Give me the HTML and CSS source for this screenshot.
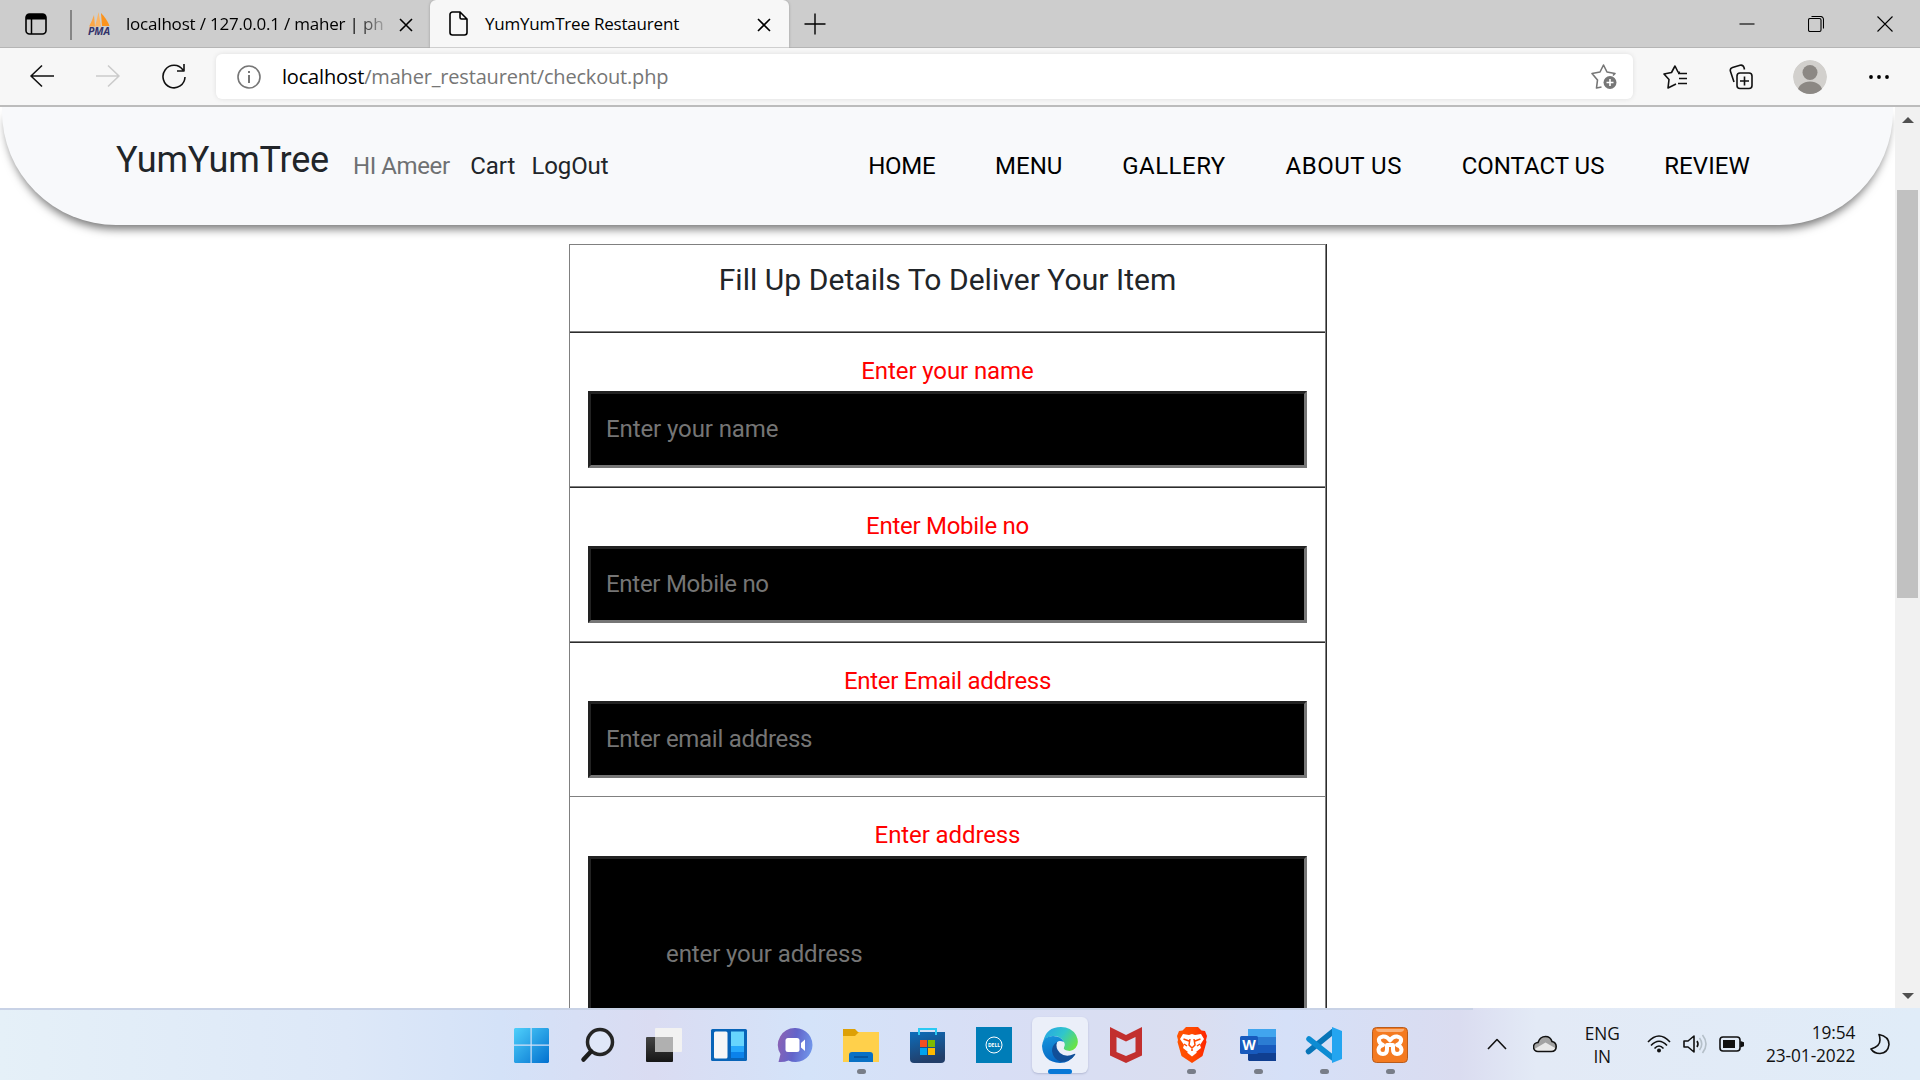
FILE: index.html
```html
<!DOCTYPE html>
<html lang="en">
<head>
<meta charset="utf-8">
<title>YumYumTree Restaurent</title>
<link rel="stylesheet" href="styles.css">
</head>
<body>
<div class="screen">
  <header class="tabstrip">
    <svg class="tab-actions" width="22" height="22" viewBox="0 0 22 22"><rect x="1" y="1" width="20" height="20" rx="3.5" fill="none" stroke="#000" stroke-width="1.6"/><path d="M1 6.5V4a3 3 0 0 1 3-3h14a3 3 0 0 1 3 3v2.500z"/><path d="M6.500 6v15" stroke="#000" stroke-width="1.500"/></svg>
    <span class="tab-divider"></span>
    <div class="tab tab-idle">
      <svg class="favicon" width="26" height="26" viewBox="0 0 26 26"><path d="M3 15.500Q6 10 8 4l1 11.500z" fill="#fba646"/><path d="M9 15.500Q11 8 12.500 1l2.500 14.500z" fill="#fbb565"/><path d="M15 2q6 6 8.500 13h-7.500z" fill="#fb931c"/><text class="pma" x="13" y="24" text-anchor="middle">PMA</text></svg>
      <span class="tab-title tab-title-cut">localhost / 127.0.0.1 / maher | ph</span>
      <svg class="x" width="14" height="14" viewBox="0 0 14 14"><path d="M1 1l12 12M13 1L1 13"/></svg>
    </div>
    <div class="tab tab-active">
      <svg class="doc" width="19" height="25" viewBox="0 0 19 25"><path d="M3.500 1H11l7 7v13.500a2.500 2.500 0 0 1-2.500 2.500h-12A2.500 2.500 0 0 1 1 21.500v-18A2.500 2.500 0 0 1 3.500 1zM11 1v5.500A1.500 1.500 0 0 0 12.500 8H18"/></svg>
      <span class="tab-title">YumYumTree Restaurent</span>
      <svg class="x" width="14" height="14" viewBox="0 0 14 14"><path d="M1 1l12 12M13 1L1 13"/></svg>
    </div>
    <svg class="new-tab" width="22" height="22" viewBox="0 0 22 22"><path d="M11 .5v21M.5 11h21"/></svg>
    <div class="window-controls">
      <svg width="16" height="16" viewBox="0 0 16 16"><path d="M.5 8h15"/></svg>
      <svg width="16" height="16" viewBox="0 0 16 16"><rect x=".5" y="2.500" width="12.500" height="13" rx="1.500"/><path d="M3.500 .5h9a3 3 0 0 1 3 3v9"/></svg>
      <svg width="16" height="16" viewBox="0 0 16 16"><path d="M.5 .5l15 15M15.500 .5l-15 15"/></svg>
    </div>
  </header>

  <div class="toolbar">
    <svg class="line-icon" width="24" height="24" viewBox="0 0 24 24"><path d="M12 1.500L1 12l11 10.500M1 12h23"/></svg>
    <svg class="line-icon dim" width="24" height="24" viewBox="0 0 24 24"><path d="M12 1.500L23 12 12 22.500M23 12H0"/></svg>
    <svg class="line-icon" width="24" height="26" viewBox="0 0 24 26"><path d="M21 7A11 11.300 0 1 0 23 14M22 1v7h-7"/></svg>
    <div class="address">
      <svg class="line-icon gray" width="24" height="24" viewBox="0 0 24 24"><circle cx="12" cy="12" r="11"/><path d="M12 10v8M12 6v2" stroke-width="2"/></svg>
      <span class="url"><b>localhost</b>/maher_restaurent/checkout.php</span>
      <svg class="line-icon gray" width="27" height="26" viewBox="0 0 27 26"><path d="M10.500 23L5.500 24l1-8L1 9.500l8-1.500L12.500 1 16 8l8 1.500-2 2"/><circle cx="19" cy="18.500" r="6.500" fill="#767676" stroke="none"/><path d="M19 15v7M15.500 18.500h7" stroke="#fff"/></svg>
    </div>
    <div class="toolbar-actions">
      <svg class="line-icon" width="24" height="24" viewBox="0 0 24 24"><path d="M17 7.500l-2-.5L12 1 8.500 7.500 1 9l5 5.500L5 23l8-4M15 8.500h9M16 13.500h8M15 18.500h9"/></svg>
      <svg class="line-icon" width="24" height="26" viewBox="0 0 24 26"><rect x="8" y="9" width="15" height="15.500" rx="3"/><path d="M15.500 12.500v9M11 17h9M5 18L1.500 7.500Q.5 4.500 3.500 3.500L11 1.200Q14 .5 15 3.500l.5 2"/></svg>
      <svg class="avatar" width="34" height="34" viewBox="0 0 34 34"><defs><clipPath id="face"><circle cx="17" cy="17" r="17"/></clipPath></defs><g clip-path="url(#face)"><circle cx="17" cy="17" r="17" fill="#d2d0cd"/><circle cx="17" cy="12.500" r="7.500" fill="#8c8884"/><ellipse cx="17" cy="32" rx="12.500" ry="10.500" fill="#8c8884"/></g></svg>
      <svg width="20" height="4" viewBox="0 0 20 4"><circle cx="2" cy="2" r="1.900"/><circle cx="10" cy="2" r="1.900"/><circle cx="18" cy="2" r="1.900"/></svg>
    </div>
  </div>

  <main class="viewport">
    <div class="page">
      <nav class="navbar">
        <a class="brand">YumYumTree</a>
        <span class="greeting">HI Ameer</span>
        <a class="cart">Cart</a>
        <a class="logout">LogOut</a>
        <div class="menu">
          <a class="tight">HOME</a><a>MENU</a><a class="s-5">GALLERY</a><a class="s-5">ABOUT US</a><a>CONTACT US</a><a class="s-1">REVIEW</a>
        </div>
      </nav>
      <form class="details">
        <div class="cell heading">Fill Up Details To Deliver Your Item</div>
        <div class="cell"><label>Enter your name</label><input placeholder="Enter your name"></div>
        <div class="cell tight"><label>Enter Mobile no</label><input placeholder="Enter Mobile no"></div>
        <div class="cell tight"><label>Enter Email address</label><input placeholder="Enter email address"></div>
        <div class="cell last"><label>Enter address</label><textarea placeholder="enter your address"></textarea></div>
      </form>
    </div>
    <div class="scrollbar">
      <svg width="12" height="6" viewBox="0 0 12 6"><path d="M0 6L6 0l6 6z"/></svg>
      <span class="thumb"></span>
      <svg class="down" width="12" height="6" viewBox="0 0 12 6"><path d="M0 0h12L6 6z"/></svg>
    </div>
  </main>

  <footer class="taskbar">
    <div class="apps">
      <div class="app"><svg viewBox="0 0 36 36"><defs><linearGradient id="win" x1="0" y1="0" x2="1" y2="1"><stop offset="0" stop-color="#4fd0fb"/><stop offset="1" stop-color="#0270cf"/></linearGradient></defs><path d="M2 1h15.500v16.500H1V2zM18.700 1H35l1 1v15.500H18.700zM1 18.700h16.500V36H2l-1-1zM18.700 18.700H36V35l-1 1H18.700z" fill="url(#win)"/></svg></div>
      <div class="app"><svg viewBox="0 0 36 36"><circle cx="21" cy="15" r="12.500" fill="#e4ecfa" fill-opacity=".6" stroke="#252525" stroke-width="3.500"/><path d="M12 24.500L4.500 32.500" stroke="#1c1c1c" stroke-width="4.500" stroke-linecap="round"/></svg></div>
      <div class="app"><svg viewBox="0 0 36 36"><defs><linearGradient id="tv" x1="0" y1="0" x2="0" y2="1"><stop offset="0" stop-color="#444"/><stop offset="1" stop-color="#161616"/></linearGradient></defs><rect x="1" y="10" width="27" height="25" rx="1" fill="url(#tv)"/><rect x="10" y="1" width="27" height="24" rx="1" fill="#f2f2f2"/><path d="M10 10h18v15H10z" fill="#b0b0b0"/></svg></div>
      <div class="app"><svg viewBox="0 0 36 36"><rect y="2" width="36" height="32" rx="1.500" fill="#0864b8"/><rect x="3" y="4.500" width="13.500" height="27" rx="1.500" fill="#f7f7f7"/><path d="M20 4.500h13V19H20z" fill="#67d5fd"/><path d="M20 19h13v6H20z" fill="#26a8fb"/><path d="M20 25h13v6H20z" fill="#0b82ea"/></svg></div>
      <div class="app"><svg viewBox="0 0 36 36"><defs><linearGradient id="chat" x1="0" y1=".3" x2="1" y2=".5"><stop offset="0" stop-color="#8b62b4"/><stop offset=".5" stop-color="#6264ca"/><stop offset="1" stop-color="#7196ea"/></linearGradient></defs><path d="M18.500 1a17 17 0 1 1-7 32.500Q7 35.500 1.500 35L3.500 27A17 17 0 0 1 18.500 1z" fill="url(#chat)"/><rect x="8.500" y="11" width="14" height="14" rx="2.500" fill="#fff"/><path d="M24 16l4-3.500v11.500l-4-3.500z" fill="#fff"/></svg></div>
      <div class="app open"><svg viewBox="0 0 36 36"><path d="M0 2h12l3 3h21v12H0z" fill="#dda006"/><path d="M0 9h12l4-4h20v30H0z" fill="#ffd04b"/><path d="M6 35V28q0-3 3-3h18q3 0 3 3v7z" fill="#0870c5"/><path d="M11 30h14" stroke="#054c92" stroke-width="1.500"/></svg></div>
      <div class="app"><svg viewBox="0 0 36 36"><defs><linearGradient id="store" x1="0" y1="0" x2=".3" y2="1"><stop offset="0" stop-color="#0d6dbb"/><stop offset="1" stop-color="#223e69"/></linearGradient></defs><path d="M0 5h35v27q0 4-4 4H4q-4 0-4-4z" fill="url(#store)"/><path d="M9 8V2h17v6" fill="none" stroke="#2bc9f3" stroke-width="2"/><path d="M10 13h7v7h-7z" fill="#f25022"/><path d="M18 13h7v7h-7z" fill="#7fba00"/><path d="M10 21h7v7h-7z" fill="#00a4ef"/><path d="M18 21h7v7h-7z" fill="#ffb900"/></svg></div>
      <div class="app"><svg viewBox="0 0 36 36"><path d="M0 0h36v36H0z" fill="#007db8"/><circle cx="18" cy="18" r="8" fill="none" stroke="#fff" stroke-width="1"/><text class="dell" x="18" y="20" text-anchor="middle">DELL</text></svg></div>
      <div class="app open current"><svg viewBox="0 0 36 36"><defs><linearGradient id="e1" x1="0" y1=".2" x2="1" y2=".7"><stop offset="0" stop-color="#27a5e5"/><stop offset=".5" stop-color="#30c6cb"/><stop offset="1" stop-color="#6ce43f"/></linearGradient><linearGradient id="e2" x1="0" y1="0" x2=".3" y2="1"><stop offset="0" stop-color="#1795dc"/><stop offset="1" stop-color="#0768c4"/></linearGradient></defs><path d="M1 15Q4 0 19 0q10 0 15 8 4 8-.5 13Q30 25 25 23.500q-4-1-3-3 1.500-2 .5-4.500Q20 10 13 9 5 8.500 1 15z" fill="url(#e1)"/><path d="M0 19Q1 9 11 9q8 0 11 6-7-3-8 3-1 10 9 12 6 .5 10-3-5 9-15 9Q1 35 0 19z" fill="url(#e2)"/><path d="M15 15q-5 3-5 9 1 8 9 11 9 0 14-7 1-2-1-1-8 4-14-1-5-5-3-11z" fill="#114f98"/></svg></div>
      <div class="app"><svg viewBox="0 0 36 36"><path d="M2 0l16 8L34 0v28.500L18 36 2 28.500zM8.500 10v15l9.500 4 9.500-4V10L18 14.500z" fill="#c22f2e" fill-rule="evenodd"/></svg></div>
      <div class="app open"><svg viewBox="0 0 36 36"><defs><linearGradient id="brave"><stop offset="0" stop-color="#ff5601"/><stop offset=".6" stop-color="#ff4500"/><stop offset="1" stop-color="#ff2200"/></linearGradient></defs><path d="M12 0h12l3.500 3.500L31 4l2 5-1 4 .5 2-4 14L18 36 7.500 29l-4-14 .5-2-1-4 2-5 3.500-.5z" fill="url(#brave)"/><path d="M9 7l6 1 3-1 3 1 6-1 3 5-4 6 1 3-5 4-4-2-4 2-5-4 1-3-4-6zM13 25.500l5-2.500 5 2.500-5 4z" fill="#fff"/><path d="M9.500 12l5.500 2M26.500 12L21 14M16 12l-1 6 3 3 3-3-1-6M18 20v4M10 17l3 2M26 17l-3 2" fill="none" stroke="#ff4a00" stroke-width="1.500"/></svg></div>
      <div class="app open"><svg viewBox="0 0 36 36"><path d="M8 2h28v9H8z" fill="#41a5ee"/><path d="M8 10h28v8H8z" fill="#2b7cd3"/><path d="M8 18h28v8H8z" fill="#185abd"/><path d="M8 26h28v8H9l-1-1z" fill="#103f91"/><rect y="9" width="18" height="18" rx="1.500" fill="#185abd"/><text class="word" x="9" y="23" text-anchor="middle">W</text></svg></div>
      <div class="app open"><svg viewBox="0 0 36 36"><path d="M2.500 24.500L27 4.500" stroke="#0875b8" stroke-width="5.500" stroke-linecap="round"/><path d="M3 12L27 31" stroke="#0d8cd3" stroke-width="5.500" stroke-linecap="round"/><path d="M26 0l10 4v28l-10 4z" fill="#24a5f0"/></svg></div>
      <div class="app open"><svg viewBox="0 0 36 36"><rect x=".5" y=".5" width="35" height="35" rx="4" fill="#f47a20" stroke="#b85c1d"/><path d="M4 2h28q0 3-4 3H8Q4 5 4 2z" fill="#f9b27c"/><path d="M18 13.500Q15 9 11 9.500 6 10.500 7 14q1 3 4 4-4 1-4.500 4.500Q6.500 27 11 27q4 0 4-4.500V18h6v4.500q0 4.500 4 4.500 4.500 0 4.500-4.500Q29 19 25 18q3-1 4-4 1-3.500-4-4.500-4-.5-7 4z" fill="none" stroke="#fff" stroke-width="4" stroke-linejoin="round"/></svg></div>
    </div>
    <div class="tray">
      <svg class="tray-line" width="20" height="12" viewBox="0 0 20 12"><path d="M1 11l9-9.500L19 11"/></svg>
      <svg class="cloud" width="24" height="18" viewBox="0 0 24 18"><path d="M5 16.500a4.500 4.500 0 0 1 0-9Q7 1.500 12.500 1.500q5 0 6.500 5 4.200 1 4.200 5 0 5-5 5z" fill="#a3a3a3"/><path d="M1.500 14l11-6.500 10.500 6-4 3H5z" fill="#e8e8e8"/><path d="M5 16.500a4.500 4.500 0 0 1 0-9Q7 1.500 12.500 1.500q5 0 6.500 5 4.200 1 4.200 5 0 5-5 5z" fill="none" stroke="#111" stroke-width="1.600"/></svg>
      <div class="lang"><span>ENG</span><span>IN</span></div>
      <svg class="tray-line wifi" width="24" height="18" viewBox="0 0 24 18"><path d="M1 7q11-12 22 0M4 10.500q8-8.500 16 0M7.500 13.500q4.500-5 9 0"/><circle cx="12" cy="15.500" r="2" fill="#111" stroke="none"/></svg>
      <svg class="tray-line speaker" width="25" height="20" viewBox="0 0 25 20"><path d="M1 7h4l6-5v16l-6-5H1zM14 7q2 3 0 6"/><path d="M16.500 4q4.500 6 0 12M19.500 1q7 9 0 18" stroke="#b4bfc8"/></svg>
      <svg class="tray-line battery" width="25" height="16" viewBox="0 0 25 16"><rect x="1" y="1" width="20" height="14" rx="3"/><path d="M4 4h12v8H4z" fill="#111" stroke="none"/><path d="M22 6l2.500 1v2.500L22 10.500z" fill="#111"/></svg>
      <div class="clock"><span>19:54</span><span>23-01-2022</span></div>
      <svg class="tray-line moon" width="20" height="22" viewBox="0 0 20 22"><path d="M9 1.500q10 2 10 10Q18 20 10 20.500 4 20.500 1 16q9-2.500 9-9 0-3-1-5.500z"/></svg>
    </div>
  </footer>
</div>
</body>
</html>
```
FILE: styles.css
```css
* { box-sizing: border-box; }
body { margin: 0; font-family: "Open Sans", "Noto Sans", sans-serif; color: #000; }
svg { display: block; flex: none; }
.screen { width: 1920px; height: 1080px; display: flex; flex-direction: column; overflow: hidden; }

/* tab strip */
.tabstrip { height: 48px; flex: none; display: flex; align-items: center; background: #cdcdcd; border-bottom: 1px solid #b5b5b5; }
.tab-actions { margin-left: 25px; }
.tab-divider { width: 2px; height: 30px; margin-left: 23px; margin-top: 3px; background: #858585; }
.tab { height: 48px; display: flex; align-items: center; }
.tab-idle { width: 358px; padding-left: 14px; }
.tab-active { width: 359px; padding-left: 19px; background: #f7f7f7; border-radius: 6px 6px 0 0; box-shadow: 0 0 3px rgba(0, 0, 0, .25); clip-path: inset(0 -4px 0 -4px); }
.tab-title { font-size: 17px; letter-spacing: -.2px; white-space: pre; }
.tab-idle .tab-title { flex: none; margin-left: 14px; width: 273px; }
.tab-active .tab-title { margin-left: 17px; width: 272px; }
.tab-title-cut { background: linear-gradient(90deg, #000 228px, #bbb 262px); background-clip: text; -webkit-background-clip: text; color: transparent; }
.x { fill: none; stroke: #000; stroke-width: 1.6; margin-top: 2px; }
.doc { fill: none; stroke: #000; stroke-width: 1.6; }
.pma { font: italic bold 10.5px "Open Sans", sans-serif; fill: #33336a; }
.new-tab { margin-left: 15px; fill: none; stroke: #000; stroke-width: 1.4; }
.window-controls { margin-left: auto; display: flex; gap: 53px; padding-right: 27px; }
.window-controls svg { fill: none; stroke: #000; stroke-width: 1.1; }

/* toolbar */
.toolbar { height: 59px; flex: none; display: flex; align-items: center; gap: 42px; padding: 0 33px 2px 30px; background: #f7f7f7; border-bottom: 2px solid #bcbcbc; }
.line-icon { fill: none; stroke: #111; stroke-width: 1.6; stroke-linejoin: round; }
.dim { stroke: #cbcbcb; }
.gray { stroke: #767676; }
.address { width: 1417px; flex: none; height: 45px; margin-left: -12px; margin-top: 2px; display: flex; align-items: center; padding: 0 15px 0 21px; background: #fff; border-radius: 6px; box-shadow: 0 0 5px rgba(0, 0, 0, .1); }
.url { margin-left: 21px; flex: 1; font-size: 20px; letter-spacing: -.18px; color: #767676; }
.url b { font-weight: 400; color: #000; }
.toolbar-actions { display: flex; align-items: center; margin-left: -12px; margin-top: 2px; }
.toolbar-actions svg + svg { margin-left: 42px; }
.toolbar-actions .avatar { margin-left: 40px; }

/* page */
.viewport { height: 901px; flex: none; display: flex; background: #fff; overflow: hidden; }
.page { width: 1895px; font-family: Roboto, sans-serif; }
.navbar { height: 120px; margin: -2px 2px 0; padding: 2px 143px 0 114px; display: flex; align-items: center; background: #f8f9fb; border-radius: 0 0 114px 114px; box-shadow: 0 8px 10px -4px rgba(0, 0, 0, .55); font-size: 24px; color: #212529; }
.brand { font-size: 36px; margin-bottom: 13px; letter-spacing: -.2px; }
.greeting { margin-left: 24px; letter-spacing: -.4px; color: #6f7173; }
.cart { margin-left: 20.5px; }
.logout { margin-left: 16px; letter-spacing: -.1px; }
.menu { margin-left: auto; display: flex; gap: 59.8px; color: #000; }
.s-1 { letter-spacing: .1px; }
.s-5 { letter-spacing: .5px; }

.details { width: 758px; margin: 19px auto 0 569px; border-left: 1px solid #808080; border-right: 1px solid #2c2c2c; }
.cell { height: 155px; padding: 0 18px; border-top: 1px solid #808080; border-right: 1px solid #808080; box-shadow: inset 0 1px #2c2c2c; text-align: center; letter-spacing: -.1px; }
.heading { height: 87px; padding-top: 17px; box-shadow: none; font-size: 30px; line-height: 36px; letter-spacing: .05px; color: #212529; }
.tight { letter-spacing: -.28px; }
.last { height: 400px; box-shadow: none; }
label { display: block; height: 59px; padding-top: 21px; line-height: 36px; font-size: 24px; color: #f00; }
.last label { padding-top: 20px; }
input, textarea { display: block; width: 719px; background: #000; border: 3px solid; border-color: #222 #767676 #767676 #222; border-radius: 0; font: 24px Roboto, sans-serif; letter-spacing: inherit; color: #fff; resize: none; outline: none; }
input { height: 77px; padding: 0 15px 1px; }
textarea { height: 330px; padding: 81px 75px; }
::placeholder { color: #757575; }

.scrollbar { width: 25px; background: #f1f1f1; display: flex; flex-direction: column; align-items: center; padding: 10px 0 9px; }
.scrollbar svg { fill: #505050; }
.thumb { width: 21px; height: 408px; margin-top: 67px; background: #c1c1c1; }
.down { margin-top: auto; }

/* taskbar */
.taskbar { height: 72px; flex: none; display: flex; background: linear-gradient(#c8d2e6, #c8d2e6) 0 0 / 1473px 2px no-repeat, linear-gradient(90deg, #e5f0f8 0, #dde8f8 18%, #d4e2f8 26%, #dadcf2 34%, #d4e3f9 42%, #d8def5 52%, #dadef0 62%, #d5e0f8 67%, #dadcf0 76%, #e3eaf6 80%, #e0ecf8 100%); }
.apps { margin-left: 498px; display: flex; gap: 10.1px; padding: 9px 5px; }
.app { width: 56px; height: 56px; padding-top: 10px; display: flex; flex-direction: column; align-items: center; border-radius: 6px; }
.app svg { width: 36px; height: 36px; overflow: visible; }
.open::after { content: ""; width: 9px; height: 5px; margin-top: 6px; flex: none; border-radius: 3px; background: #787d88; }
.current { background: #ebeff9; box-shadow: 0 1px 2px rgba(90, 100, 140, .3); }
.current::after { width: 24px; background: #0878d7; }
.dell { font: bold 5px "Open Sans", sans-serif; fill: #fff; }
.word { font: bold 14px "Open Sans", sans-serif; fill: #fff; }
.tray { flex: 1; display: flex; align-items: center; margin-left: 64px; font-size: 17.3px; line-height: 23px; letter-spacing: -.1px; color: #111; }
.tray-line { fill: none; stroke: #111; stroke-width: 1.6; stroke-linejoin: round; }
.cloud { margin-left: 26px; }
.lang { width: 36px; margin-left: 27px; padding-top: 1px; display: flex; flex-direction: column; align-items: center; }
.wifi { margin-left: 27px; }
.speaker { margin-left: 12px; }
.battery { margin-left: 11px; }
.clock { width: 104px; margin-left: 7px; display: flex; flex-direction: column; align-items: flex-end; }
.moon { margin-left: 15px; }
```
